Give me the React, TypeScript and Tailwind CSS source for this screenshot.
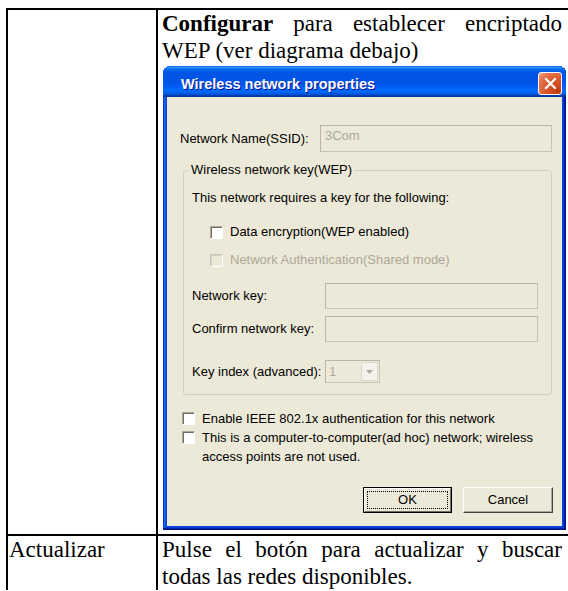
const dialogFont = "font-['Liberation_Sans',Arial,sans-serif] text-[13px] leading-[16px] text-black";

function CheckBox({ disabled = false }: { disabled?: boolean }) {
  return (
    <span
      className={
        disabled
          ? "inline-block w-[13px] h-[13px] shrink-0 border border-t-[#C9C6B8] border-l-[#C9C6B8] border-r-white border-b-white bg-[#ECE9D8] shadow-[inset_1px_1px_#D6D3C6]"
          : "inline-block w-[13px] h-[13px] shrink-0 border border-t-[#ACA899] border-l-[#ACA899] border-r-white border-b-white bg-white shadow-[inset_1px_1px_#716F64]"
      }
    />
  );
}

function TextBox({ width, children }: { width: string; children?: React.ReactNode }) {
  return (
    <div
      className={`${width} h-[26px] border border-[#C7C4B6] border-t-[#B9B6A8] border-l-[#B9B6A8] bg-[#ECE9D8] pl-[4px] pt-[3px] text-[#ACA899]`}
    >
      {children}
    </div>
  );
}

function CloseButton() {
  return (
    <div className="mt-[6px] mr-[4px] w-[24px] h-[23px] rounded-[3px] border border-white bg-[radial-gradient(circle_at_85%_85%,#c23c10_0%,#dd5a2c_50%,#e57a52_80%,#f3b49b_100%)] flex items-center justify-center">
      <svg width="13" height="13" viewBox="0 0 13 13">
        <path d="M2 2 L11 11 M11 2 L2 11" stroke="white" strokeWidth="2.2" strokeLinecap="square" />
      </svg>
    </div>
  );
}

function KeyIndexSelect() {
  return (
    <div className="w-[55px] h-[23px] border border-[#C7C4B6] border-t-[#B9B6A8] border-l-[#B9B6A8] bg-[#ECE9D8] flex items-center">
      <span className="flex-1 pl-[3px] text-[#ACA899]">1</span>
      <span className="w-[17px] h-[19px] mr-[1px] border border-[#DAD7CB] bg-[#F3F2EC] flex items-center justify-center">
        <svg width="7" height="4" viewBox="0 0 7 4">
          <path d="M0 0 H7 L3.5 4 Z" fill="#ACA899" />
        </svg>
      </span>
    </div>
  );
}

function WirelessDialog() {
  return (
    <div className={`w-[403px] ml-[1px] mt-[2px] rounded-t-[8px] overflow-hidden bg-[#0A46D8] shadow-[inset_-1px_-1px_#00138c,inset_1px_1px_#0831d9,inset_-2px_-2px_#001ea0,inset_2px_2px_#166aee,inset_-3px_-3px_#003bda,inset_3px_3px_#0855dd] ${dialogFont}`}>
      <div className="h-[31px] flex items-start justify-between bg-[linear-gradient(180deg,#0058ee_0%,#3593ff_4%,#288eff_6%,#127dff_8%,#036ffc_10%,#0262ee_14%,#0057e5_20%,#0054e3_24%,#0055eb_56%,#005bf5_66%,#026afe_76%,#0062ef_86%,#0052d6_92%,#0040ab_94%,#003092_100%)]">
        <span className="pl-[18px] pt-[9px] text-[14.5px] leading-[18px] font-bold text-white [text-shadow:1px_1px_#0f1089]">
          Wireless network properties
        </span>
        <CloseButton />
      </div>

      <div className="mx-[4px] mb-[4px] h-[429px] bg-[#ECE9D8] pl-[13px] pt-[28px]">
        <div className="flex items-center h-[27px]">
          <span className="w-[140px]">Network Name(SSID):</span>
          <div className="w-[232px] h-[27px] border border-[#C7C4B6] border-t-[#B9B6A8] border-l-[#B9B6A8] pl-[4px] pt-[2px] text-[#ACA899]">
            3Com
          </div>
        </div>

        <div className="relative mt-[18px] ml-[3px] w-[369px] border border-[#D0D0BF] rounded-[3px] pl-[8px] pt-[19px] pb-[11px]">
          <span className="absolute -top-[9px] left-[5px] bg-[#ECE9D8] px-[2px]">Wireless network key(WEP)</span>
          <div className="h-[16px]">This network requires a key for the following:</div>
          <div className="mt-[18px] ml-[18px] h-[16px] flex items-center gap-[7px]">
            <CheckBox />
            <span>Data encryption(WEP enabled)</span>
          </div>
          <div className="mt-[12px] ml-[18px] h-[16px] flex items-center gap-[7px] text-[#ACA899]">
            <CheckBox disabled />
            <span>Network Authentication(Shared mode)</span>
          </div>
          <div className="mt-[15px] flex items-center">
            <span className="w-[133px]">Network key:</span>
            <TextBox width="w-[213px]" />
          </div>
          <div className="mt-[7px] flex items-center">
            <span className="w-[133px]">Confirm network key:</span>
            <TextBox width="w-[213px]" />
          </div>
          <div className="mt-[18px] flex items-center">
            <span className="w-[133px]">Key index (advanced):</span>
            <KeyIndexSelect />
          </div>
        </div>

        <div className="mt-[14px] ml-[2px] flex items-center gap-[7px] leading-[19px]">
          <CheckBox />
          <span>Enable IEEE 802.1x authentication for this network</span>
        </div>
        <div className="ml-[2px] flex items-start gap-[7px] leading-[19px] w-[372px]">
          <span className="mt-[3px] flex">
            <CheckBox />
          </span>
          <span>This is a computer-to-computer(ad hoc) network; wireless access points are not used.</span>
        </div>

        <div className="mt-[21px] ml-[183px] flex gap-[11px]">
          <button className="w-[89px] h-[26px] border border-black bg-[#ECE9D8] p-0">
            <div className="h-full border border-t-white border-l-white border-r-[#716F64] border-b-[#716F64] p-[2px]">
              <div className="h-full border border-dotted border-black flex items-center justify-center">OK</div>
            </div>
          </button>
          <button className="w-[90px] h-[26px] border border-t-white border-l-white border-r-[#404040] border-b-[#404040] bg-[#ECE9D8] shadow-[inset_-1px_-1px_#ACA899] flex items-center justify-center">
            Cancel
          </button>
        </div>
      </div>
    </div>
  );
}

export default function App() {
  return (
    <div className="w-[568px] h-[591px] bg-white">
      <div className="w-[568px] h-[591px] overflow-hidden pt-[8px] pl-[6px] font-['Liberation_Serif','Times_New_Roman',serif] text-black">
        <div className="w-[562px] border-t-2 border-l-2 border-black">
          <div className="flex border-b-2 border-black">
            <div className="w-[150px] shrink-0 border-r-2 border-black" />
            <div className="flex-1 min-w-0 pl-[4px] pb-[4px]">
              <p className="w-[400px] text-[23px] leading-[27px] text-justify">
                <b>Configurar</b> para establecer encriptado WEP (ver diagrama debajo)
              </p>
              <WirelessDialog />
            </div>
          </div>
          <div className="flex text-[23px] leading-[27px]">
            <div className="w-[150px] shrink-0 border-r-2 border-black pl-[1px]">Actualizar</div>
            <div className="flex-1 min-w-0 pl-[4px]">
              <p className="w-[400px] text-justify">
                Pulse el botón para actualizar y buscar todas las redes disponibles.
              </p>
            </div>
          </div>
        </div>
      </div>
    </div>
  );
}
